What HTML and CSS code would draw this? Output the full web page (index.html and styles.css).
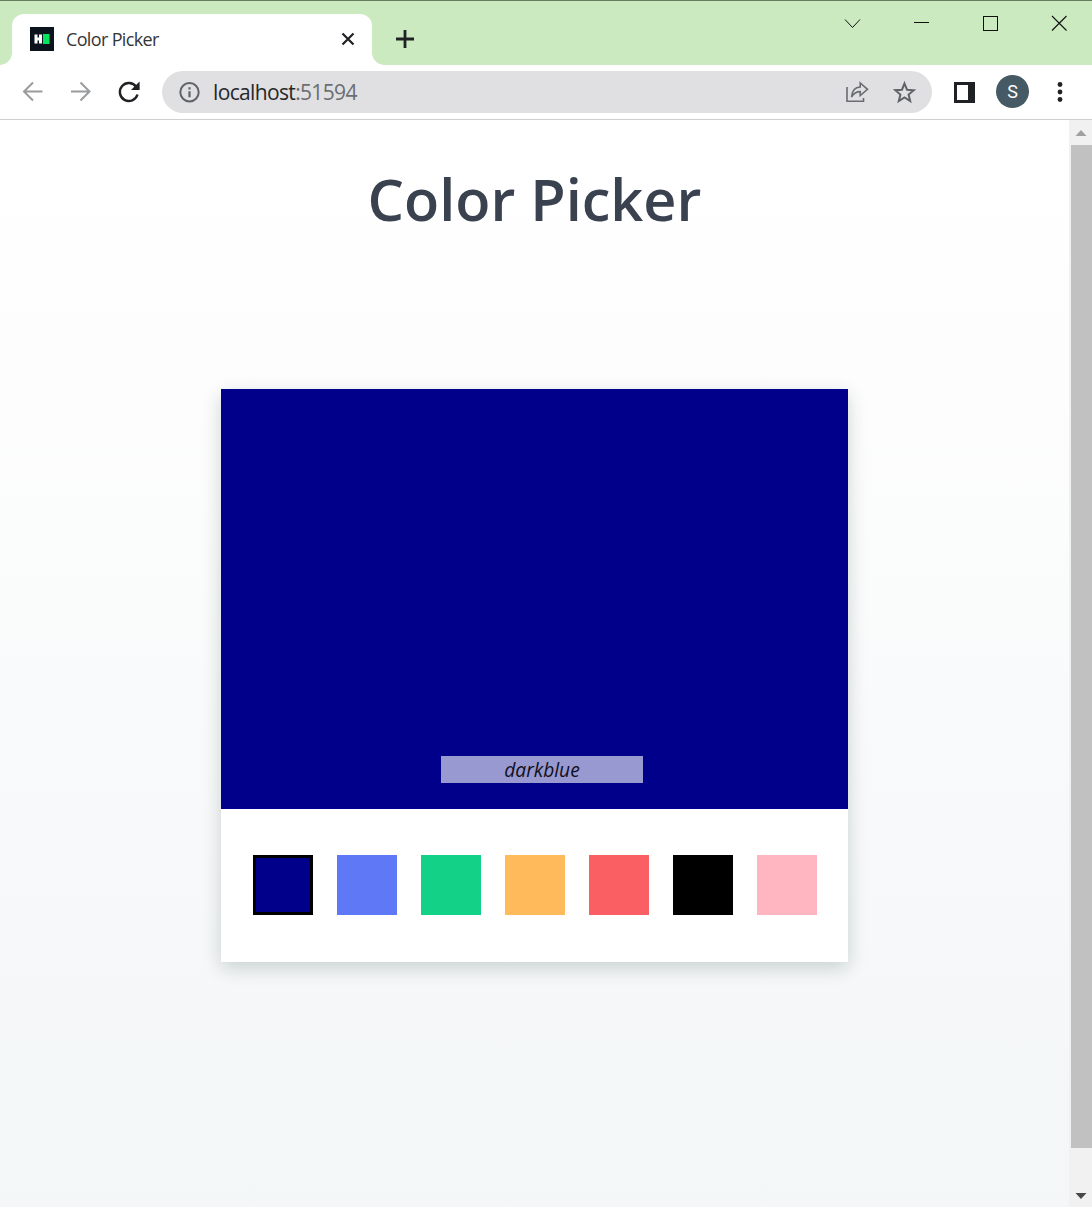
FILE: index.html
```html
<!DOCTYPE html>
<html lang="en">
<head>
<meta charset="utf-8">
<title>Color Picker</title>
<link rel="stylesheet" href="styles.css">
</head>
<body>
<div class="window">
  <header class="tabbar">
    <div class="tab">
      <svg class="favicon" width="24" height="24" viewBox="0 0 24 24"><rect width="24" height="24" fill="#0b141c"/><path d="M4.500 7.500h3v3h1.500v-3h3v9h-3v-3h-1.500v3h-3z" fill="#fff"/><rect x="13" y="7" width="6.500" height="10" fill="#05e660"/></svg>
      <span class="tab-title">Color Picker</span>
      <svg class="tab-close" width="16" height="16" viewBox="0 0 16 16"><path d="M2.500 2.500l11 11M13.500 2.500l-11 11" stroke="#202124" stroke-width="2.200"/></svg>
    </div>
    <svg class="new-tab" width="20" height="20" viewBox="0 0 20 20"><path d="M10 1v18M1 10h18" stroke="#202124" stroke-width="2.800"/></svg>
    <div class="controls">
      <svg width="17" height="17" viewBox="0 0 17 17"><path d="M1 4.500l7.500 8L16 4.500" fill="none" stroke="#111" stroke-width="1"/></svg>
      <svg width="17" height="17" viewBox="0 0 17 17"><path d="M1 7.500h15" stroke="#111"/></svg>
      <svg width="17" height="17" viewBox="0 0 17 17"><rect x="1.500" y="1.500" width="14" height="14" fill="none" stroke="#111"/></svg>
      <svg width="17" height="17" viewBox="0 0 17 17"><path d="M1 1l14.500 14.500M15.500 1L1 15.500" stroke="#111" stroke-width="1.100"/></svg>
    </div>
  </header>
  <nav class="toolbar">
    <div class="nav-icons">
      <svg width="24" height="24" viewBox="0 0 24 24" fill="none" stroke="#9a9b9d" stroke-width="2"><path d="M21.500 11.500H3.500M12 2.500l-9 9 9 9"/></svg>
      <svg width="24" height="24" viewBox="0 0 24 24" fill="none" stroke="#9a9b9d" stroke-width="2"><path d="M2 11.500h18M11.500 2.500l9 9-9 9"/></svg>
      <svg width="24" height="24" viewBox="0 0 24 24"><path d="M19.200 6.800A9 9 0 1 0 20.500 14.500" fill="none" stroke="#202124" stroke-width="2.400"/><path d="M22.600 1.500v8.500H14z" fill="#202124"/></svg>
    </div>
    <div class="address">
      <svg width="22" height="22" viewBox="0 0 22 22"><circle cx="11.500" cy="11.300" r="9.200" fill="none" stroke="#5f6368" stroke-width="2"/><path d="M11.500 10.300v6M11.500 6.300v2.200" stroke="#5f6368" stroke-width="2.200"/></svg>
      <span class="url">localhost<span class="port">:51594</span></span>
      <svg class="share" width="24" height="22" viewBox="0 0 24 22" fill="none" stroke="#6a6c70" stroke-width="1.600"><path d="M2 6v14.200h16.500V17"/><path d="M6.500 16C7 9.500 10 6.200 15.200 6V2L22.500 8.300l-7.300 6.200V10.600C11 10.600 8.500 12.500 6.500 16z"/></svg>
      <svg class="star" width="24" height="24" viewBox="0 0 24 24"><path d="M11.500 3.500l2.500 6.200 6.700.5-5.100 4.300 1.600 6.500-5.700-3.500L5.800 21l1.600-6.500-5.100-4.300 6.700-.5z" fill="none" stroke="#5f6368" stroke-width="2"/></svg>
    </div>
    <svg class="panel" width="21" height="21" viewBox="0 0 21 21"><path d="M0 0h21v21H0zM3 3v15h11V3z" fill="#202124" fill-rule="evenodd"/></svg>
    <div class="avatar">S</div>
    <svg class="menu" width="6" height="20" viewBox="0 0 6 20" fill="#202124"><circle cx="3" cy="2.500" r="2.400"/><circle cx="3" cy="10" r="2.400"/><circle cx="3" cy="17.500" r="2.400"/></svg>
  </nav>
  <div class="viewport">
    <main class="page">
      <h1 class="heading">Color Picker</h1>
      <section class="card">
        <div class="preview"><div class="color-name">darkblue</div></div>
        <div class="swatches">
          <div class="swatch darkblue selected"></div>
          <div class="swatch blue"></div>
          <div class="swatch green"></div>
          <div class="swatch orange"></div>
          <div class="swatch red"></div>
          <div class="swatch black"></div>
          <div class="swatch pink"></div>
        </div>
      </section>
    </main>
    <div class="scrollbar">
      <svg width="23" height="25" viewBox="0 0 23 25"><path d="M6.500 16L12 10l5.500 6z" fill="#a0a0a0"/></svg>
      <div class="thumb"></div>
      <svg class="down" width="23" height="25" viewBox="0 0 23 25"><path d="M6.500 11h11L12 17z" fill="#484848"/></svg>
    </div>
  </div>
</div>
</body>
</html>
```
FILE: styles.css
```css
* { box-sizing: border-box; }
body { margin: 0; font-family: "Open Sans", "Noto Sans", sans-serif; }
svg { display: block; flex: none; }
.window { width: 1092px; height: 1207px; display: flex; flex-direction: column; overflow: hidden; background: #fff; }
.tabbar { height: 65px; flex: none; display: flex; align-items: flex-start; background: #cbeac0; border-top: 1px solid #657d5c; }
.tab { position: relative; width: 360px; height: 51px; margin: 13px 0 0 12px; padding: 0 16px 2px 18px; display: flex; align-items: center; background: #fff; border-radius: 12px 12px 0 0; }
.tab::before, .tab::after { content: ""; position: absolute; bottom: 0; width: 12px; height: 12px; }
.tab::before { left: -12px; background: radial-gradient(circle at 0 0, transparent 11.5px, #fff 12px); }
.tab::after { right: -12px; background: radial-gradient(circle at 100% 0, transparent 11.5px, #fff 12px); }
.tab-title { margin-left: 12px; font: 400 18px/24px "Open Sans", sans-serif; letter-spacing: -.65px; color: #34363a; white-space: nowrap; }
.tab-close { margin-left: auto; }
.new-tab { margin: 28px 0 0 23px; }
.controls { display: flex; gap: 52px; margin: 14px 24px 0 auto; }
.toolbar { height: 55px; flex: none; display: flex; align-items: center; border-bottom: 1px solid #cfcfd1; padding: 0 29px 0 21px; }
.nav-icons { display: flex; gap: 24px; width: 141px; }
.address { width: 770px; height: 42px; border-radius: 21px; background: #e0e0e3; display: flex; align-items: center; padding: 0 15px 0 16px; }
.url { margin-left: 13px; font: 400 21px/30px "Open Sans", sans-serif; letter-spacing: -.65px; color: #25272a; }
.port { color: #6b6d71; }
.share { margin-left: auto; }
.star { margin-left: 24px; }
.panel { margin-left: 22px; }
.avatar { width: 33px; height: 33px; margin: -1px 0 0 21px; border-radius: 50%; background: #455a64; color: #fff; font: 400 18px/33px Roboto, sans-serif; text-align: center; }
.menu { margin-left: auto; }
.viewport { flex: 1; display: flex; min-height: 0; }
.page { flex: 1; display: flex; flex-direction: column; align-items: center; background: linear-gradient(#fff 0%, #fdfdfd 25%, #f6f8f9 75%, #f3f7f7 100%); }
.heading { margin: 40px 0 0; font-weight: 600; font-size: 57.6px; line-height: 78px; color: #39424e; white-space: nowrap; }
.card { width: 627px; height: 573px; margin-top: 151px; background: #fff; box-shadow: 0 6px 18px rgba(0, 40, 35, .19); }
.preview { height: 420px; display: flex; align-items: flex-end; background: #00008b; padding: 0 0 26px 220px; }
.color-name { width: 202px; height: 27px; background: #9999d1; color: #10101a; font-size: 19.2px; line-height: 28px; font-style: italic; text-align: center; }
.swatches { display: flex; gap: 24px; padding: 46px 32px; }
.swatch { width: 60px; height: 60px; flex: none; }
.selected { border: 3px solid #000; }
.darkblue { background: #00008b; }
.blue { background: #5e78f6; }
.green { background: #13d187; }
.orange { background: #ffba5c; }
.red { background: #fa5f64; }
.black { background: #000; }
.pink { background: #ffb6c1; }
.scrollbar { width: 23px; flex: none; display: flex; flex-direction: column; background: #f1f1f1; }
.thumb { height: 1003px; margin-left: 2px; background: #c1c1c1; }
.down { margin-top: auto; }
```
